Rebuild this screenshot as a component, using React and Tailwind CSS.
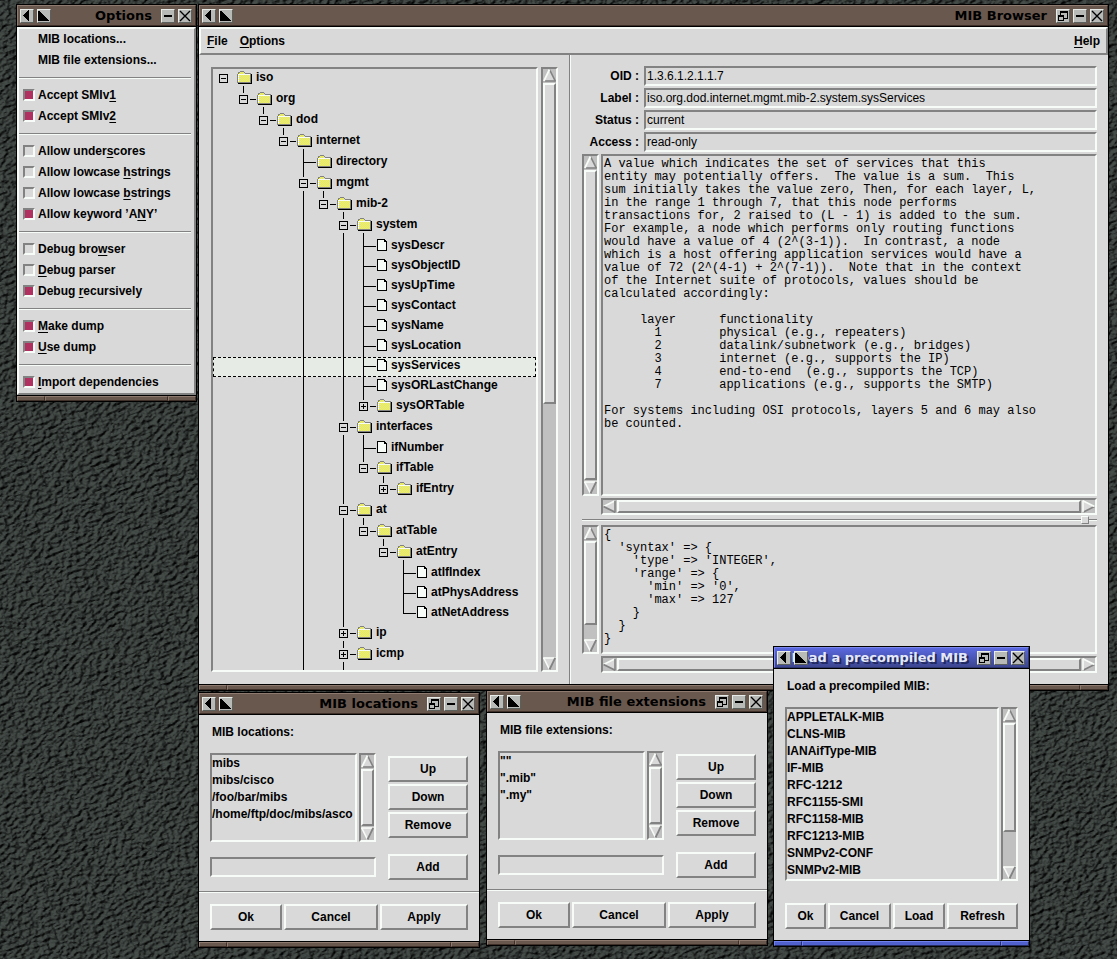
import React from "react";

const RAISED =
  "border-2 border-t-[#f8fcf8] border-l-[#f8fcf8] border-r-[#828282] border-b-[#828282]";
const SUNKEN =
  "border-2 border-t-[#828282] border-l-[#828282] border-r-[#f8fcf8] border-b-[#f8fcf8]";

/* ---------- desktop ---------- */

function Rock() {
  return (
    <svg className="absolute inset-0 h-full w-full" aria-hidden="true">
      <filter id="rock" x="0" y="0" width="100%" height="100%" colorInterpolationFilters="sRGB">
        <feTurbulence type="fractalNoise" baseFrequency="0.18 0.3" numOctaves="5" seed="7" result="n" />
        <feDiffuseLighting in="n" surfaceScale="4.5" diffuseConstant="0.66" lightingColor="#6c7872">
          <feDistantLight azimuth="235" elevation="58" />
        </feDiffuseLighting>
      </filter>
      <rect width="100%" height="100%" fill="#363c39" />
      <g transform="rotate(-20)">
        <rect x="-400" y="-50" width="1600" height="1400" filter="url(#rock)" />
      </g>
    </svg>
  );
}

/* ---------- window frame ---------- */

const GLYPHS = {
  back: <path d="M8 0v11h-1v-1h-1v-1h-1v-1h-1v-1h-1v-1h-1v-1h1v-1h1v-1h1v-1h1v-1h1v-1z" fill="#000" />,
  corner: <path d="M0 1h2v1h1v1h1v1h1v1h1v1h1v1h1v1h1v1h1v1h1v1h-11z" fill="#000" />,
  restore: (
    <path d="M3 1h8v8h-4v2h-6v-6h2zM4 3v2h3v3h3v-5zM2 7v3h4v-3z" fill="#000" fillRule="evenodd" />
  ),
  minus: <path d="M2 5h8v2h-8z" fill="#000" />,
  close: (
    <path d="M1 1l10 10M11 1l-10 10" stroke="#000" strokeWidth="1.400" fill="none" shapeRendering="auto" />
  ),
};

function FrameButton({ glyph, label }) {
  return (
    <button
      type="button"
      aria-label={label}
      className="relative z-10 h-3.5 w-3.5 shrink-0 border border-t-[#e8ece8] border-l-[#e8ece8] border-r-[#5c605c] border-b-[#5c605c] bg-[#b8bab8]"
    >
      <svg viewBox="0 0 12 12" width="12" height="12" shapeRendering="crispEdges">
        {GLYPHS[glyph]}
      </svg>
    </button>
  );
}

function Window({ title, place, active, maximize = true, children }) {
  const bar = active
    ? "bg-linear-to-b from-[#5a68e0] to-[#3c4690] border-t-[#7c88f0] border-l-[#7c88f0] border-r-[#2c3470] border-b-[#2c3470]"
    : "bg-[#69584e] border-t-[#8e7a6e] border-l-[#8e7a6e] border-r-[#3e3028] border-b-[#3e3028]";
  const foot = active
    ? "bg-[#5060cc] border-t-[#7080ec] border-l-[#7080ec] border-r-[#242c60] border-b-[#242c60]"
    : "bg-[#69584e] border-t-[#8e7a6e] border-l-[#8e7a6e] border-r-[#3e3028] border-b-[#3e3028]";
  const text = active
    ? "text-[#e4e8f8] [text-shadow:2px_2px_0_#20285c]"
    : "text-black";
  return (
    <section aria-label={title} className={"absolute border border-black bg-[#d9d9d9] " + place}>
      <header
        className={"flex h-[21px] items-center gap-[3px] overflow-hidden border pl-0.5 pr-[3px] " + bar}
      >
        <FrameButton glyph="back" label="Back" />
        <FrameButton glyph="corner" label="Shade" />
        <h2
          className={
            "flex min-w-0 flex-1 justify-end pr-1.5 whitespace-nowrap font-['DejaVu_Sans',sans-serif] text-[13px] font-bold leading-4 " +
            text
          }
        >
          {title}
        </h2>
        {maximize && <FrameButton glyph="restore" label="Maximize" />}
        <FrameButton glyph="minus" label="Minimize" />
        <FrameButton glyph="close" label="Close" />
      </header>
      <div className="border-y border-black">{children}</div>
      <div className="flex h-[5px]">
        <div className={"w-7 border " + foot} />
        <div className={"flex-1 border " + foot} />
        <div className={"w-7 border " + foot} />
      </div>
    </section>
  );
}

/* ---------- Tk widgets ---------- */

function Arrow({ dir, label }) {
  const turn = {
    up: "",
    down: "rotate(180 6.5 6.5)",
    left: "rotate(-90 6.5 6.5)",
    right: "rotate(90 6.5 6.5)",
  }[dir];
  const edges = {
    up: ["#f8fcf8", "#828282", "#828282"],
    down: ["#828282", "#f8fcf8", "#f8fcf8"],
    left: ["#828282", "#f8fcf8", "#828282"],
    right: ["#f8fcf8", "#828282", "#f8fcf8"],
  }[dir];
  return (
    <button type="button" aria-label={label} className="block h-[13px] w-[13px] shrink-0">
      <svg viewBox="0 0 13 13" width="13" height="13">
        <g transform={turn}>
          <path d="M6.500 0.500L0.500 12.500h12z" fill="#d9d9d9" />
          <path d="M12.500 12.500L6.500 0.500" stroke={edges[1]} strokeWidth="1.600" />
          <path d="M0.500 12h12" stroke={edges[2]} strokeWidth="1.600" />
          <path d="M6.500 0.500L0.800 12.200" stroke={edges[0]} strokeWidth="1.800" />
        </g>
      </svg>
    </button>
  );
}

function VScroll({ fill = "flex-1" }) {
  return (
    <div className={"flex w-[17px] shrink-0 flex-col gap-px bg-[#c0c0c0] " + SUNKEN}>
      <Arrow dir="up" label="Scroll up" />
      <div className="flex min-h-0 flex-1 flex-col">
        <div className={"bg-[#d9d9d9] " + RAISED + " " + fill} />
      </div>
      <Arrow dir="down" label="Scroll down" />
    </div>
  );
}

function HScroll() {
  return (
    <div className={"flex h-[17px] shrink-0 gap-px bg-[#c0c0c0] " + SUNKEN}>
      <Arrow dir="left" label="Scroll left" />
      <div className={"flex-1 bg-[#d9d9d9] " + RAISED} />
      <Arrow dir="right" label="Scroll right" />
    </div>
  );
}

function Button({ children }) {
  return (
    <button type="button" className={"h-[26px] w-full bg-[#d9d9d9] pb-px text-center font-bold " + RAISED}>
      {children}
    </button>
  );
}

function Listbox({ label, items }) {
  return (
    <ul
      role="listbox"
      aria-label={label}
      className={"min-w-0 flex-1 overflow-hidden whitespace-nowrap " + SUNKEN}
    >
      {items.map((t) => (
        <li key={t} role="option" aria-selected="false" className="h-[17px] leading-[17px]">
          {t}
        </li>
      ))}
    </ul>
  );
}

const Rule = () => <div className="h-0.5 border-t border-b border-t-[#828282] border-b-[#f8fcf8]" />;

/* ---------- options menu ---------- */

// An underscore marks the letter that follows it as the shortcut.
function Mnemonic({ text }) {
  const i = text.indexOf("_");
  if (i < 0) return text;
  return (
    <>
      {text.slice(0, i)}
      <span className="underline decoration-1 underline-offset-2">{text[i + 1]}</span>
      {text.slice(i + 2)}
    </>
  );
}

const OPTIONS = [
  [["MIB locations..."], ["MIB file extensions..."]],
  [["Accept SMIv_1", true], ["Accept SMIv_2", true]],
  [
    ["Allow under_scores", false],
    ["Allow lowcase _hstrings", false],
    ["Allow lowcase _bstrings", false],
    ["Allow keyword ’A_NY’", true],
  ],
  [["Debug bro_wser", false], ["_Debug parser", false], ["Debug _recursively", true]],
  [["_Make dump", true], ["_Use dump", true]],
  [["_Import dependencies", true]],
];

function OptionsMenu() {
  return (
    <div className={RAISED}>
      {OPTIONS.map((group, g) => (
        <div key={g}>
          {g > 0 && (
            <div className="py-1.5 pr-[3px]">
              <Rule />
            </div>
          )}
          {group.map(([text, on]) =>
            on === undefined ? (
              <button key={text} type="button" className="block h-[21px] w-full pb-0.5 pl-[19px] text-left font-bold">
                {text}
              </button>
            ) : (
              <label key={text} className="flex h-[21px] items-center gap-[3px] pb-px pl-1">
                <input
                  type="checkbox"
                  defaultChecked={on}
                  className={"h-3 w-3 shrink-0 appearance-none bg-clip-padding checked:bg-[#b03060] " + SUNKEN}
                />
                <span className="whitespace-nowrap">
                  <Mnemonic text={text} />
                </span>
              </label>
            )
          )}
        </div>
      ))}
    </div>
  );
}

/* ---------- MIB tree ---------- */

const leaf = (name) => ({ name, leaf: true });
const dir = (name, kids) => ({ name, kids });
const shut = (name) => ({ name, closed: true });

const TREE = dir("iso", [
  dir("org", [
    dir("dod", [
      dir("internet", [
        { name: "directory" },
        {
          ...dir("mgmt", [
            dir("mib-2", [
              dir("system", [
                leaf("sysDescr"),
                leaf("sysObjectID"),
                leaf("sysUpTime"),
                leaf("sysContact"),
                leaf("sysName"),
                leaf("sysLocation"),
                leaf("sysServices"),
                leaf("sysORLastChange"),
                shut("sysORTable"),
              ]),
              dir("interfaces", [leaf("ifNumber"), dir("ifTable", [shut("ifEntry")])]),
              dir("at", [
                dir("atTable", [
                  dir("atEntry", [leaf("atIfIndex"), leaf("atPhysAddress"), leaf("atNetAddress")]),
                ]),
              ]),
              shut("ip"),
              { ...shut("icmp"), more: true },
            ]),
          ]),
          more: true,
        },
      ]),
    ]),
  ]),
]);

function flatten(node, depth, guides, last, out) {
  const next = !last || !!node.more;
  out.push({ ...node, depth, guides, next });
  (node.kids || []).forEach((k, i) =>
    flatten(k, depth + 1, [...guides, next], i === node.kids.length - 1, out)
  );
  return out;
}

const ROWS = flatten(TREE, 0, [], true, []);

function Guides({ row, height }) {
  const x = row.depth * 20 + 10;
  const box = row.kids || row.closed;
  let d = "";
  row.guides.forEach((on, i) => {
    if (on) d += `M${i * 20 + 10} 0h1v${height}h-1z`;
  });
  if (row.depth > 0) {
    d += box ? `M${x} 0h1v3h-1z` : `M${x} 0h1v10h-1z`;
    d += box ? `M${x + 7} 9h6v1h-6z` : `M${x + 1} 9h12v1h-12z`;
  }
  if (row.next) d += box ? `M${x} 17h1v${height - 17}h-1z` : `M${x} 10h1v${height - 10}h-1z`;
  if (box) {
    d += `M${x - 4} 5h9v9h-9zM${x - 3} 6v7h7v-7zM${x - 2} 9h5v1h-5z`;
    if (row.closed) d += `M${x} 7h1v2h-1zM${x} 10h1v2h-1z`;
  }
  return (
    <svg width={row.depth * 20 + 24} height={height} className="shrink-0" shapeRendering="crispEdges">
      <path d={d} fill="#000" fillRule="evenodd" />
    </svg>
  );
}

function NodeIcon({ row, height }) {
  if (row.leaf)
    return (
      <svg width="10" height={height} className="shrink-0" shapeRendering="crispEdges">
        <path d="M0 2h8v1h1v1h1v10h-10z" fill="#000" />
        <path d="M1 3h6v2h2v8h-8z" fill="#f8fcf8" />
      </svg>
    );
  return (
    <svg width="15" height={height} className="shrink-0" shapeRendering="crispEdges">
      <path d="M3 2h4v1h1v1h6v10h-14v-9h1v-2h2z" fill="#828282" />
      <path d="M3 3h4v1h-4zM1 5h12v1h-11v7h-1z" fill="#f8fcf8" />
      <rect x="2" y="6" width="11" height="7" fill="url(#dither)" />
      <path d="M3 3h4v1h1v1h-6v-1h1z" fill="url(#dither)" />
      <path d="M14 5h1v10h-14v-1h13z" fill="#000" />
      {row.kids && <path d={`M6 17h1v${height - 17}h-1z`} fill="#000" />}
    </svg>
  );
}

function Tree() {
  return (
    <ul role="tree" aria-label="MIB tree" className={"min-w-0 flex-1 overflow-hidden " + SUNKEN}>
      {ROWS.map((row) => {
        const height = row.leaf ? 20 : 21;
        const picked = row.name === "sysServices";
        return (
          <li
            key={row.name}
            role="treeitem"
            aria-selected={picked}
            className={
              (row.leaf ? "h-5 " : "h-[21px] ") +
              "flex leading-4 " +
              (picked ? "bg-[#e6ebe6] outline-1 -outline-offset-1 outline-dashed outline-black" : "")
            }
          >
            <Guides row={row} height={height} />
            <NodeIcon row={row} height={height} />
            <span className="ml-1">{row.name}</span>
          </li>
        );
      })}
      <li role="presentation">
        <svg width="140" height="12" className="block" shapeRendering="crispEdges">
          <path d="M90 0h1v12h-1zM130 0h1v12h-1z" />
        </svg>
      </li>
    </ul>
  );
}

/* ---------- browser ---------- */

const FIELDS = [
  ["OID", "1.3.6.1.2.1.1.7"],
  ["Label", "iso.org.dod.internet.mgmt.mib-2.system.sysServices"],
  ["Status", "current"],
  ["Access", "read-only"],
];

const DESCRIPTION = `A value which indicates the set of services that this
entity may potentially offers.  The value is a sum.  This
sum initially takes the value zero, Then, for each layer, L,
in the range 1 through 7, that this node performs
transactions for, 2 raised to (L - 1) is added to the sum.
For example, a node which performs only routing functions
would have a value of 4 (2^(3-1)).  In contrast, a node
which is a host offering application services would have a
value of 72 (2^(4-1) + 2^(7-1)).  Note that in the context
of the Internet suite of protocols, values should be
calculated accordingly:

     layer      functionality
       1        physical (e.g., repeaters)
       2        datalink/subnetwork (e.g., bridges)
       3        internet (e.g., supports the IP)
       4        end-to-end  (e.g., supports the TCP)
       7        applications (e.g., supports the SMTP)

For systems including OSI protocols, layers 5 and 6 may also
be counted.`;

const SYNTAX = `{
  'syntax' => {
    'type' => 'INTEGER',
    'range' => {
      'min' => '0',
      'max' => 127
    }
  }
}`;

const MONO =
  "block min-w-0 flex-1 resize-none overflow-hidden whitespace-pre bg-[#d9d9d9] pl-px pt-0.5 font-['Liberation_Mono',monospace] text-[12px] font-normal leading-[13px] outline-none ";

function Browser() {
  return (
    <div className="flex h-[657px] flex-col">
      <nav className={"flex h-7 shrink-0 items-center gap-3 px-1.5 " + RAISED}>
        <button type="button" className="font-bold">
          <Mnemonic text="_File" />
        </button>
        <button type="button" className="font-bold">
          <Mnemonic text="_Options" />
        </button>
        <button type="button" className="ml-auto font-bold">
          <Mnemonic text="_Help" />
        </button>
      </nav>
      <div className="flex min-h-0 flex-1">
        <div className="flex w-[370px] shrink-0 gap-[3px] py-3 pl-3 pr-[11px]">
          <Tree />
          <VScroll fill="h-[56%]" />
        </div>
        <div className="w-0.5 border-l border-r border-l-[#828282] border-r-[#f8fcf8]" />
        <div className="flex min-w-0 flex-1 flex-col px-[11px] py-[11px]">
          <div className="grid grid-cols-[57px_1fr] gap-x-[5px] gap-y-0.5">
            {FIELDS.map(([name, value]) => (
              <React.Fragment key={name}>
                <label htmlFor={"field-" + name} className="text-right leading-5">
                  {name} :
                </label>
                <input
                  id={"field-" + name}
                  readOnly
                  defaultValue={value}
                  className={"h-5 w-full min-w-0 bg-[#d9d9d9] pl-px font-normal outline-none " + SUNKEN}
                />
              </React.Fragment>
            ))}
          </div>
          <div className="mt-0.5 flex min-h-0 flex-1 gap-0.5">
            <VScroll />
            <textarea aria-label="Description" readOnly defaultValue={DESCRIPTION} className={MONO + SUNKEN} />
          </div>
          <div className="mt-0.5 pl-[19px]">
            <HScroll />
          </div>
          <div className="relative flex h-2.5 shrink-0 flex-col justify-center">
            <Rule />
            <div className="absolute right-2 top-px h-2 w-2 border border-t-[#f8fcf8] border-l-[#f8fcf8] border-r-[#828282] border-b-[#828282] bg-[#d9d9d9]" />
          </div>
          <div className="flex h-[129px] shrink-0 gap-0.5">
            <VScroll fill="h-[87%]" />
            <textarea aria-label="Syntax" readOnly defaultValue={SYNTAX} className={MONO + SUNKEN} />
          </div>
          <div className="mt-0.5 pl-[19px]">
            <HScroll />
          </div>
        </div>
      </div>
    </div>
  );
}

/* ---------- dialogs ---------- */

function EditList({ label, items }) {
  return (
    <div className="pb-[11px] pt-[9px]">
      <div className="px-[13px] leading-4">{label}</div>
      <div className="mt-[13px] flex gap-3 px-[11px]">
        <div className="min-w-0 flex-1">
          <div className="flex h-[89px] gap-0.5">
            <Listbox label={label} items={items} />
            <VScroll />
          </div>
          <input
            aria-label={"New entry, " + label}
            className={"mt-[15px] block h-5 w-full bg-[#d9d9d9] px-px font-normal outline-none " + SUNKEN}
          />
        </div>
        <div className="w-20 pt-[3px]">
          <div className="flex flex-col gap-0.5">
            <Button>Up</Button>
            <Button>Down</Button>
            <Button>Remove</Button>
          </div>
          <div className="mt-4">
            <Button>Add</Button>
          </div>
        </div>
      </div>
      <div className="my-[11px]">
        <Rule />
      </div>
      <div className="grid grid-cols-[72fr_94fr_88fr] gap-0.5 px-[11px]">
        <Button>Ok</Button>
        <Button>Cancel</Button>
        <Button>Apply</Button>
      </div>
    </div>
  );
}

const MIBS = [
  "APPLETALK-MIB",
  "CLNS-MIB",
  "IANAifType-MIB",
  "IF-MIB",
  "RFC-1212",
  "RFC1155-SMI",
  "RFC1158-MIB",
  "RFC1213-MIB",
  "SNMPv2-CONF",
  "SNMPv2-MIB",
];

function LoadDialog() {
  return (
    <div className="px-[11px] pb-[11px] pt-[9px]">
      <div className="px-0.5 leading-4">Load a precompiled MIB:</div>
      <div className="mt-[13px] flex h-[174px] gap-0.5">
        <Listbox label="Precompiled MIBs" items={MIBS} />
        <VScroll fill="h-[77%]" />
      </div>
      <div className="mt-[22px] grid grid-cols-[41fr_63fr_52fr_71fr] gap-0.5">
        <Button>Ok</Button>
        <Button>Cancel</Button>
        <Button>Load</Button>
        <Button>Refresh</Button>
      </div>
    </div>
  );
}

export default function App() {
  return (
    <main className="relative min-h-screen overflow-hidden bg-[#363c39] font-['Liberation_Sans',sans-serif] text-[12px] font-bold text-black">
      <Rock />
      <svg width="0" height="0" className="absolute" aria-hidden="true">
        <pattern id="dither" width="2" height="2" patternUnits="userSpaceOnUse">
          <rect width="2" height="2" fill="#d9d9d9" />
          <path d="M0 0h1v1h-1zM1 1h1v1h-1z" fill="#f8fc00" />
        </pattern>
      </svg>
      <Window title="Options" place="left-4 top-1 w-[181px]" maximize={false}>
        <OptionsMenu />
      </Window>
      <Window title="MIB Browser" place="left-[198px] top-1 w-[911px]">
        <Browser />
      </Window>
      <Window title="MIB locations" place="left-[198px] top-[692px] w-[282px]">
        <EditList
          label="MIB locations:"
          items={["mibs", "mibs/cisco", "/foo/bar/mibs", "/home/ftp/doc/mibs/asco"]}
        />
      </Window>
      <Window title="MIB file extensions" place="left-[486px] top-[690px] w-[282px]">
        <EditList label="MIB file extensions:" items={['""', '".mib"', '".my"']} />
      </Window>
      <Window title="Load a precompiled MIB" place="left-[773px] top-[646px] w-[257px]" active>
        <LoadDialog />
      </Window>
    </main>
  );
}
